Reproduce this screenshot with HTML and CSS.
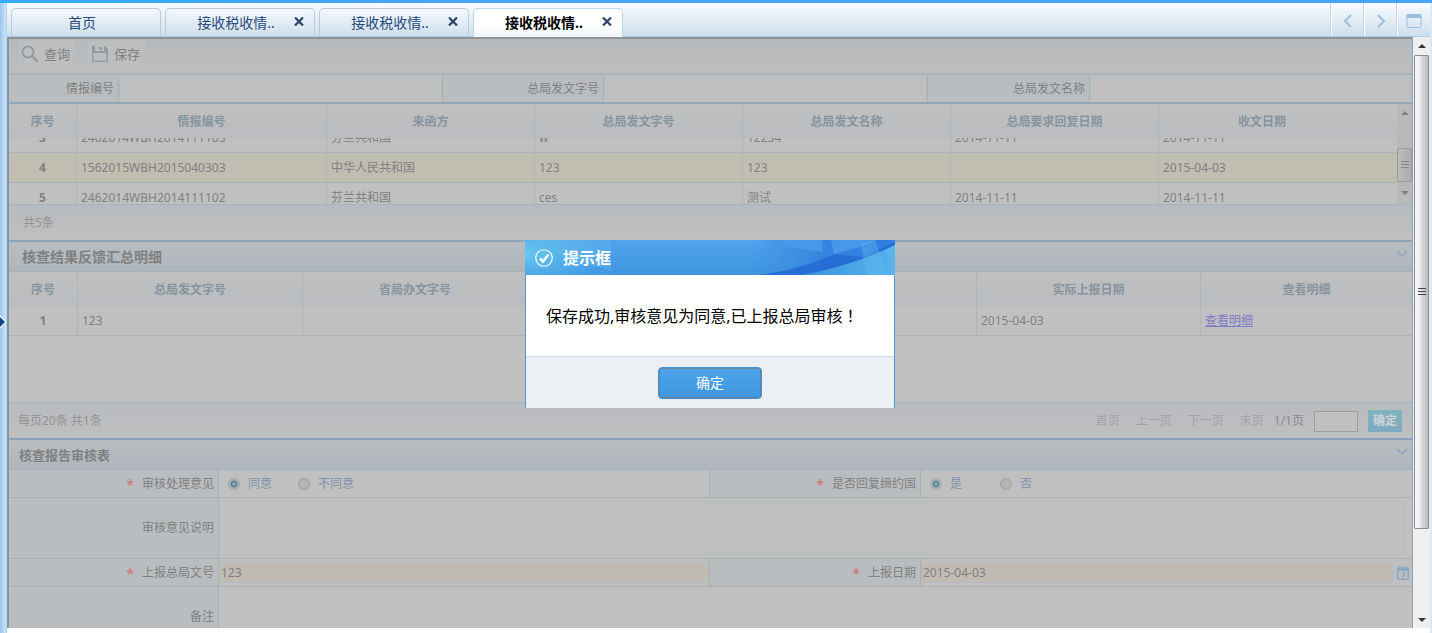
FILE: index.html
```html
<!DOCTYPE html>
<html lang="zh-CN">
<head>
<meta charset="utf-8">
<title>接收税收情报</title>
<link rel="stylesheet" href="styles.css">
</head>
<body>
<div class="top-strip"></div>
<div class="shell">
  <div class="rail">
    <button class="rail-toggle" type="button" aria-label="展开">
      <svg width="6" height="14" viewBox="0 0 6 14"><path d="M0 0L6 7L0 14Z" fill="#fff"/><path d="M0 2L5 7L0 12Z" fill="#0d4a86"/></svg>
    </button>
  </div>
  <div class="workspace">
    <nav class="tabbar">
      <div class="tab"><a href="#" class="tab-name">首页</a></div>
      <div class="tab"><a href="#" class="tab-name">接收税收情..</a><button class="tab-close" type="button" aria-label="关闭"><svg width="10" height="9" viewBox="0 0 10 9"><path d="M1 0.5L9 8.5M9 0.5L1 8.5" stroke="#2f436b" stroke-width="2.2"/></svg></button></div>
      <div class="tab"><a href="#" class="tab-name">接收税收情..</a><button class="tab-close" type="button" aria-label="关闭"><svg width="10" height="9" viewBox="0 0 10 9"><path d="M1 0.5L9 8.5M9 0.5L1 8.5" stroke="#2f436b" stroke-width="2.2"/></svg></button></div>
      <div class="tab active"><a href="#" class="tab-name">接收税收情..</a><button class="tab-close" type="button" aria-label="关闭"><svg width="10" height="9" viewBox="0 0 10 9"><path d="M1 0.5L9 8.5M9 0.5L1 8.5" stroke="#2f436b" stroke-width="2.2"/></svg></button></div>
      <div class="tab-tools">
        <button type="button" aria-label="上一个"><svg width="16" height="14" viewBox="0 0 16 14"><path d="M11 1L5 7L11 13" fill="none" stroke="#9bc0e2" stroke-width="2"/></svg></button>
        <button type="button" aria-label="下一个"><svg width="16" height="14" viewBox="0 0 16 14"><path d="M5 1L11 7L5 13" fill="none" stroke="#9bc0e2" stroke-width="2"/></svg></button>
        <button type="button" aria-label="窗口"><svg width="16" height="14" viewBox="0 0 16 14"><rect x="1" y="0.5" width="14" height="13" rx="1.5" fill="none" stroke="#9bbfdf"/><path d="M0.5 2Q0.5 0 2 0H14Q15.500 0 15.500 2V4H0.500Z" fill="#9bbfdf"/></svg></button>
      </div>
    </nav>

    <div class="viewport">
      <main class="page">
        <div class="toolbar">
          <button class="tool" type="button"><svg width="18" height="18" viewBox="0 0 18 18"><circle cx="7" cy="7" r="5.500" fill="none" stroke="#8b969b" stroke-width="1.600"/><path d="M11 11L16.500 16.500" stroke="#98a1a5" stroke-width="2.600"/></svg>查询</button>
          <button class="tool" type="button"><svg width="18" height="18" viewBox="0 0 18 18"><path fill-rule="evenodd" d="M1 1H14L17 4V17H1ZM2.500 8V15.500H15.500V8ZM4 1V6H13V1Z" fill="#8f9ca3"/><rect x="8" y="2" width="3" height="3" fill="#8f9ca3"/></svg>保存</button>
        </div>

        <form class="search">
          <label class="cell-label" for="q1">情报编号</label><div class="cell"><input id="q1" type="text"></div>
          <label class="cell-label" for="q2">总局发文字号</label><div class="cell"><input id="q2" type="text"></div>
          <label class="cell-label" for="q3">总局发文名称</label><div class="cell"><input id="q3" type="text"></div>
        </form>

        <section class="grid-one">
          <div class="grid-main">
            <table class="data first">
              <colgroup><col class="c-no"><col class="c-id"><col class="c-std"><col class="c-std"><col class="c-std"><col class="c-std"><col></colgroup>
              <thead><tr><th>序号</th><th>情报编号</th><th>来函方</th><th>总局发文字号</th><th>总局发文名称</th><th>总局要求回复日期</th><th class="last">收文日期</th></tr></thead>
            </table>
            <div class="rows">
              <table class="data first scrolled">
                <colgroup><col class="c-no"><col class="c-id"><col class="c-std"><col class="c-std"><col class="c-std"><col class="c-std"><col></colgroup>
                <tbody>
                  <tr><td>3</td><td>2462014WBH2014111103</td><td>芬兰共和国</td><td>w</td><td>12234</td><td>2014-11-11</td><td>2014-11-11</td></tr>
                  <tr class="picked"><td>4</td><td>1562015WBH2015040303</td><td>中华人民共和国</td><td>123</td><td>123</td><td></td><td>2015-04-03</td></tr>
                  <tr><td>5</td><td>2462014WBH2014111102</td><td>芬兰共和国</td><td>ces</td><td>测试</td><td>2014-11-11</td><td>2014-11-11</td></tr>
                </tbody>
              </table>
            </div>
          </div>
          <div class="bar small" aria-hidden="true"><i class="up"></i><i class="thumb"></i><i class="down"></i></div>
        </section>
        <div class="grid-foot count">共5条</div>

        <h2 class="title big">核查结果反馈汇总明细<svg width="12" height="8" viewBox="0 0 12 8"><path d="M1 1L6 6L11 1" fill="none" stroke="#8ba6bd" stroke-width="1.500"/></svg></h2>
        <section class="grid-two">
          <table class="data second">
            <colgroup><col class="c-num"><col class="c-wide"><col class="c-wide"><col class="c-mid"><col class="c-wide"><col class="c-mid"><col></colgroup>
            <thead><tr><th>序号</th><th>总局发文字号</th><th>省局办文字号</th><th></th><th></th><th>实际上报日期</th><th>查看明细</th></tr></thead>
            <tbody><tr><td>1</td><td>123</td><td></td><td></td><td></td><td>2015-04-03</td><td><a href="#">查看明细</a></td></tr></tbody>
          </table>
        </section>
        <div class="grid-foot pager">
          <span class="total">每页20条 共1条</span>
          <a href="#">首页</a><a href="#">上一页</a><a href="#">下一页</a><a href="#">末页</a>
          <span class="current">1/1页</span>
          <input type="text" aria-label="页码">
          <button type="button">确定</button>
        </div>

        <h2 class="title">核查报告审核表<svg width="12" height="8" viewBox="0 0 12 8"><path d="M1 1L6 6L11 1" fill="none" stroke="#8ba6bd" stroke-width="1.500"/></svg></h2>
        <form class="review">
          <div class="cell-label"><b>*</b>审核处理意见</div>
          <div class="cell choices">
            <label><input type="radio" name="opinion" checked>同意</label>
            <label><input type="radio" name="opinion">不同意</label>
          </div>
          <div class="cell-label"><b>*</b>是否回复缔约国</div>
          <div class="cell choices">
            <label><input type="radio" name="reply" checked>是</label>
            <label><input type="radio" name="reply">否</label>
          </div>
          <label class="cell-label" for="note">审核意见说明</label>
          <div class="cell full"><textarea id="note"></textarea></div>
          <label class="cell-label" for="docno"><b>*</b>上报总局文号</label>
          <div class="cell"><input class="needed" id="docno" type="text" value="123"></div>
          <label class="cell-label" for="day"><b>*</b>上报日期</label>
          <div class="cell dated"><input class="needed" id="day" type="text" value="2015-04-03"><button type="button" aria-label="选择日期"><svg width="12" height="14" viewBox="0 0 12 14"><rect x="0.750" y="2" width="10.500" height="11.250" rx="1" fill="none" stroke="#8ba8c4" stroke-width="1.500"/><path d="M0 2H12V5H0Z" fill="#8ba8c4"/><path d="M1.500 0V2M4 0V2M6.500 0V2M9 0V2" stroke="#8ba8c4"/><path d="M4.500 6.500H7.500V11H4.500M5 8.750H7.500" fill="none" stroke="#8ba8c4"/></svg></button></div>
          <label class="cell-label" for="memo">备注</label>
          <div class="cell full"><textarea class="plain" id="memo"></textarea></div>
        </form>
      </main>
      <div class="bar" aria-hidden="true"><i class="up"></i><i class="thumb"></i><i class="rest"></i><i class="down"></i></div>

      <div class="dialog-layer">
        <div class="dialog" role="dialog" aria-labelledby="dlg">
          <header>
            <svg class="art" viewBox="0 0 370 35" preserveAspectRatio="none">
              <defs>
                <linearGradient id="base" x2="0" y2="1"><stop offset="0" stop-color="#50a5ec"/><stop offset="1" stop-color="#3e94de"/></linearGradient>
                <radialGradient id="glow" cx="0" cy="0.400" r="1"><stop offset="0" stop-color="#67caf2"/><stop offset="1" stop-color="#46a0e4" stop-opacity="0.500"/></radialGradient>
                <linearGradient id="deep"><stop offset="0" stop-color="#3b8de0" stop-opacity="0"/><stop offset="0.500" stop-color="#3583df"/><stop offset="1" stop-color="#2f7de0"/></linearGradient>
                <linearGradient id="sea"><stop offset="0" stop-color="#3d93e0"/><stop offset="1" stop-color="#55b2ec"/></linearGradient>
              </defs>
              <rect width="370" height="35" fill="url(#base)"/>
              <rect width="86" height="35" fill="url(#glow)"/>
              <path d="M0 0H86V30Q40 20 8 0Z" fill="#69baf0" opacity="0.350"/>
              <path d="M225 0H370V35H225Z" fill="url(#deep)"/>
              <path d="M246 0H297L298 12Q266 8 248 3ZM306 0H352Q332 9 309 14Z" fill="#4897e8"/>
              <path d="M236 35Q280 28 309 14L338 17L370 2V6Q330 26 278 35Z" fill="#266ed6"/>
              <path d="M278 35Q330 25 370 5V35Z" fill="url(#sea)"/>
              <path d="M336 4L350 0L356 16L363 35H341ZM362 9L370 5V35H365Z" fill="#65b9ee" opacity="0.400"/>
            </svg>
            <svg width="18" height="18" viewBox="0 0 18 18"><circle cx="9" cy="9" r="8.250" fill="none" stroke="#fff" stroke-width="1.200"/><path d="M5 9.500L8 12.500L13.500 5.500" fill="none" stroke="#fff" stroke-width="2.500"/></svg>
            <h1 id="dlg">提示框</h1>
          </header>
          <p>保存成功,审核意见为同意,已上报总局审核<span class="mark" lang="zh-TW">！</span></p>
          <footer><button type="button">确定</button></footer>
        </div>
      </div>
    </div>
  </div>
</div>
</body>
</html>
```

FILE: styles.css
```css
* { box-sizing: border-box; }

html, body { height: 100%; }

body {
  margin: 0;
  display: flex;
  flex-direction: column;
  overflow: hidden;
  background: #fff;
  color: #808080;
  font: 12px/18px "Noto Sans", "Noto Sans CJK SC", sans-serif;
}

button, input, textarea { font: inherit; color: inherit; margin: 0; }
button { padding: 0; border: 0; background: none; cursor: pointer; }
a { color: inherit; text-decoration: none; }
svg { display: block; flex: none; }

.top-strip { height: 3px; flex: none; background: linear-gradient(90deg, #35abf5, #48a3fa 30%); }

.shell { flex: 1; min-height: 0; display: flex; border-right: 2px solid #dbe9f7; }

.rail {
  width: 7px;
  flex: none;
  display: flex;
  align-items: center;
  padding-top: 8px;
  background: linear-gradient(90deg, #9fc4ea, #c8e2fb 80%, #a5cdf2);
}

.workspace { flex: 1; min-width: 0; display: flex; flex-direction: column; }

/* tabs */
.tabbar {
  height: 34px;
  flex: none;
  display: flex;
  align-items: flex-end;
  gap: 4px;
  padding-left: 4px;
  border-bottom: 1px solid #a9cbed;
  background: linear-gradient(#f8fcff, #cfdeec);
}
.tab {
  width: 150px;
  height: 28px;
  display: flex;
  align-items: center;
  justify-content: center;
  position: relative;
  border: 1px solid #b9cbdd;
  border-bottom: 0;
  border-radius: 5px 5px 0 0;
  background: linear-gradient(#f3f9fd, #cfdfed);
  color: #2b4a7c;
  font-size: 14px;
}
.tab-name { padding-right: 8px; }
.tab-close { position: absolute; right: 10px; top: 8px; }
.tab.active { background: linear-gradient(#fff 60%, #f0f4f8); border-color: #bcd5ee; color: #000; font-weight: bold; height: 29px; margin-bottom: -1px; }
.tab-tools { margin-left: auto; align-self: stretch; display: flex; }
.tab-tools button {
  width: 33px;
  display: flex;
  align-items: center;
  justify-content: center;
  padding-top: 3px;
  border-left: 1px solid #fff;
  box-shadow: -1px 0 #c5d8ea;
}

.viewport { flex: 1; min-height: 0; display: flex; position: relative; padding-bottom: 5px; }
.page {
  flex: 1;
  min-width: 0;
  overflow: hidden;
  border: solid #929292;
  border-width: 2px 1px 0 2px;
  border-left-color: #8594a1;
  border-right-color: #8ca5bb;
  background: #c0c0c0;
}

/* scroll bars */
.bar {
  width: 17px;
  flex: none;
  display: grid;
  grid-template-rows: 18px 475fr 82fr 17px;
  padding: 0 1px;
  background: #efeff0;
}
.bar i { display: grid; place-items: center; }
.bar .up::before, .bar .down::before { content: ""; border: 4px solid transparent; border-top-width: 0; border-bottom-color: #333; }
.bar .down::before { border-width: 4px 4px 0; border-color: #333 transparent transparent; }
.bar .thumb { border: 1px solid #8c8c8e; border-radius: 1px; background: linear-gradient(90deg, #f5f5f5 30%, #dcdce0 50%, #b8b9be); }
.bar .thumb::before { content: ""; width: 8px; height: 8px; background: repeating-linear-gradient(#444 0 1px, transparent 1px 3px); }
.bar.small { width: 15px; padding: 0; grid-template-rows: 18px 1fr 22px; background: #b9b9b9; }
.bar.small .up::before { border-bottom-color: #808080; }
.bar.small .down::before { border-top-color: #808080; }
.bar.small .thumb { height: 34px; align-self: end; border-color: #9a9a9a; background: linear-gradient(90deg, #bcbcbc, #aeaeb0); }
.bar.small .thumb::before { background: repeating-linear-gradient(#858585 0 1px, transparent 1px 3px); }

/* tool bar */
.toolbar {
  height: 36px;
  display: flex;
  align-items: flex-start;
  gap: 11px;
  padding: 1px 8px;
  border-bottom: 2px solid #a8b2bb;
  background: linear-gradient(#b5b8ba, #bebec0);
}
.tool {
  display: flex;
  align-items: center;
  gap: 5px;
  height: 27px;
  padding: 0 5px 0 3px;
  border: 1px solid #b9babb;
  border-radius: 3px;
  background: #bdbebf;
  font-size: 13px;
}

/* label and field cells */
.search { display: grid; grid-template-columns: 110px 324fr 161px 324fr 162px 322fr; border-bottom: 2px solid #90a5b5; }
.review { display: grid; grid-template-columns: 210px 1fr 211px 1fr; }
.cell-label {
  display: flex;
  align-items: center;
  justify-content: flex-end;
  padding-right: 4px;
  border-right: 1px solid #a6b1b1;
  background: #babdbf;
}
.cell-label b { margin-right: 8px; color: #cc7272; font-size: 14px; line-height: 12px; height: 10px; font-weight: normal; }
.cell { display: flex; height: 27px; padding: 3px 0; border-right: 1px solid #a6b1b1; }
.cell input[type="text"], .cell textarea {
  flex: 1;
  min-width: 0;
  padding: 0 2px;
  border: 1px solid #b5bbc0;
  background: #c0c0c0;
  outline: 0;
  resize: none;
}
.search .cell:last-child { border-right: 0; }
.cell input[type="text"].needed { padding: 0 1px; background: #c0bcb4; }
.review .cell-label, .review .cell { border-bottom: 1px solid #a6b1b1; height: 28px; }
.review .full { grid-column: span 3; height: 61px; padding-right: 8px; border-right: 0; }
.review .cell-label:has(+ .full) { height: 61px; }
.review .cell.full textarea.plain { border-color: transparent; }
.dated { gap: 4px; padding-right: 3px; align-items: stretch; border-right: 0; }
.choices { align-items: center; padding-left: 9px; color: #8090ac; }
.choices:nth-child(4) { border-right: 0; }
.choices label { display: flex; align-items: center; gap: 8px; width: 70px; }
.choices input {
  appearance: none;
  width: 12px;
  height: 12px;
  border: 1px solid #a0a2a4;
  border-radius: 50%;
  background: radial-gradient(#b9b9b9, #adadad);
}
.choices input:checked { background: radial-gradient(circle, #86a9bb 0 1px, #547b91 3px, #b5b8ba 4px); }

/* tables */
.data { width: 100%; table-layout: fixed; border-collapse: separate; border-spacing: 0; }
.c-no { width: 68px; }
.c-id { width: 250px; }
.c-std { width: 208px; }
.c-num { width: 69px; }
.c-wide { width: 225px; }
.c-mid { width: 224px; }
.data th, .data td { padding: 0 4px; border-right: 1px solid #adb5ba; white-space: nowrap; overflow: hidden; }
.data th:last-child, .data td:last-child { border-right: 0; }
.data th { height: 34px; padding-top: 2px; background: linear-gradient(#c0c0c0, #babcbf); color: #87949d; }
.data th.last { padding-right: 36px; }
.data td { height: 30px; border-bottom: 1px solid #aab3be; text-align: left; }
.data td:first-child { text-align: center; font-weight: bold; }
.data td a { color: #827cc4; text-decoration: underline; }
.data .picked td { background: #c0beb0; }
.grid-one { display: flex; }
.grid-main { flex: 1; min-width: 0; }
.rows { height: 66px; overflow: hidden; }
.scrolled { margin-top: -15px; }
.grid-two { height: 130px; }
.grid-foot {
  height: 38px;
  display: flex;
  align-items: center;
  border-top: 1px solid #a8b3bf;
  border-bottom: 2px solid #8ca5ba;
  background: linear-gradient(#b7babe, #c0c0c0);
  color: #929292;
}
.count { padding-left: 14px; }
.pager { gap: 10px; padding: 0 10px 0 9px; color: #8a8a8a; background: linear-gradient(#b8bbbf, #bfbfc0); }
.total { margin-right: auto; color: #929292; }
.pager a { margin-right: 6px; color: #a2a2a2; }
.pager a:nth-of-type(4) { margin-right: 0; }
.pager input { width: 44px; height: 21px; border: 1px solid #9e9e9e; background: #c0c0c0; margin-top: 2px; }
.pager button { width: 34px; height: 22px; background: linear-gradient(#80b4c0, #80a8c0); color: #cfd4d6; font-weight: bold; }

.title {
  height: 30px;
  margin: 0;
  padding: 0 4px 0 10px;
  display: flex;
  align-items: center;
  justify-content: space-between;
  border-bottom: 1px solid #a4afb9;
  background: linear-gradient(#b9bdc0, #afb6bb);
  font-size: 13px;
}
.title.big { padding-left: 13px; font-size: 14px; }
.title svg { margin-bottom: 6px; }

/* message dialog */
.dialog-layer { position: absolute; inset: 0 17px 0 0; padding-top: 203px; display: flex; justify-content: center; align-items: flex-start; }
.dialog { width: 370px; background: #fff; color: #000; }
.dialog header { position: relative; height: 35px; display: flex; align-items: center; gap: 10px; padding-left: 10px; color: #fff; }
.dialog header > * { position: relative; }
.dialog header .art { position: absolute; inset: 0; width: 100%; height: 100%; }
.dialog h1 { margin: 0; font-size: 16px; line-height: 24px; }
.dialog p { margin: 0; padding: 29px 20px 28px; border: solid #4598dc; border-width: 0 1px; font-size: 16px; line-height: 24px; white-space: nowrap; }
.dialog .mark { font-family: "Noto Sans CJK TC", sans-serif; line-height: 16px; }
.dialog footer { padding: 11px 0 9px; display: flex; justify-content: center; border: solid #4598dc; border-width: 0 1px; background: #eceff4; box-shadow: inset 0 1px #d3dbe7; }
.dialog footer button {
  width: 104px;
  height: 32px;
  border: 1px solid #3f93da;
  border-radius: 4px;
  outline: 1px dotted #8a6a50;
  outline-offset: -2px;
  background: linear-gradient(#4fa5ec, #4096de);
  color: #fff;
  font-size: 14px;
}
```
